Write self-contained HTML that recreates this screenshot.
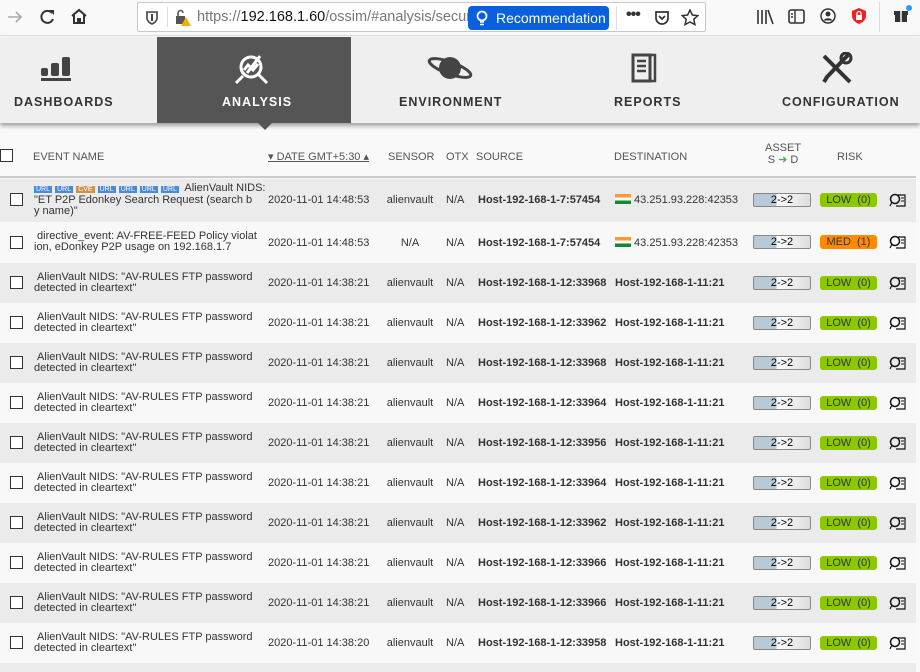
<!DOCTYPE html>
<html><head><meta charset="utf-8"><style>
*{box-sizing:border-box;margin:0;padding:0}
body{width:920px;height:672px;overflow:hidden;background:#f9f9f9;font-family:"Liberation Sans",sans-serif;position:relative;color:#333}
.tb{position:absolute;left:0;top:0;width:920px;height:36px;background:#f9f9fa;border-bottom:1px solid #ddd}
.url{position:absolute;left:137px;top:2px;width:569px;height:30px;border:1px solid #c8c8c8;background:#fff;border-radius:2px}
.nav{position:absolute;left:0;top:37px;width:920px;height:86px;background:#efefef;box-shadow:0 3px 4px rgba(0,0,0,.35)}
.navi{position:absolute;top:58px;font-size:12.5px;font-weight:bold;letter-spacing:1px;color:#333}
.ana{position:absolute;left:157px;top:0;width:194px;height:86px;background:#555}
.row{position:absolute;left:0;width:916px;height:40px;font-size:11px;color:#333}
.row div{position:absolute}
.g{background:#ebebeb}.w{background:#f8f8f8}
.cb{left:10px;width:13px;height:13px;border:1px solid #333;background:#fff}
.ev{left:34px;line-height:11px;font-size:11px;white-space:nowrap}
.dt{left:268px}.sn{left:370px;width:80px;text-align:center}.ot{left:446px}
.src{left:478px;font-weight:bold}.dst{left:615px;font-weight:bold}
.as{left:753px;width:58px;height:14px;border:1px solid #888;border-radius:2px;background:linear-gradient(90deg,#b7cad6 0 40%,#fff 40%,#ddd);text-align:center;font-size:11px;line-height:12px;color:#000}
.rk{left:820px;width:57px;height:14px;border-radius:3px;background:#8cc800;text-align:center;line-height:14px;font-size:11px;color:#333;word-spacing:3px}
.ic{left:889px;width:17px;height:14px}
</style></head><body>
<div class="tb">
<svg style="position:absolute;left:6px;top:9px" width="18" height="16"><path d="M2 8h13M10 3l5 5-5 5" stroke="#aaa" stroke-width="1.6" fill="none"/></svg>
<svg style="position:absolute;left:39px;top:8px" width="18" height="18"><path d="M13 5a6 6 0 1 0 1 6" stroke="#333" stroke-width="2" fill="none"/><path d="M10 2h5v5z" fill="#333"/></svg>
<svg style="position:absolute;left:70px;top:7px" width="18" height="18"><path d="M2 9l7-6 7 6M4 8v8h4v-4h2v4h4V8" stroke="#333" stroke-width="2" fill="none"/></svg>
<div class="url">
<svg style="position:absolute;left:7px;top:7px" width="14" height="16"><path d="M2 2h10v6c0 4-5 6-5 6S2 12 2 8z" stroke="#444" stroke-width="1.6" fill="none"/><path d="M7 4v7" stroke="#444" stroke-width="2"/></svg>
<div style="position:absolute;left:29px;top:4px;width:1px;height:20px;background:#ddd"></div>
<svg style="position:absolute;left:37px;top:6px" width="18" height="18"><rect x="1" y="7" width="9" height="8" fill="#555"/><path d="M3 7V4a2.5 2.5 0 0 1 5 0" stroke="#555" stroke-width="1.6" fill="none"/><path d="M11 8l5 9h-10z" fill="#f3b000"/></svg>
<div style="position:absolute;left:59px;top:6px;font-size:14.5px;color:#777;white-space:nowrap">https://<span style="color:#111">192.168.1.60</span>/ossim/#analysis/secur</div>
<div style="position:absolute;left:330px;top:3px;width:141px;height:24px;background:#0a60dc;border-radius:4px;color:#fff;font-size:14px;line-height:24px;padding-left:28px">Recommendation
<svg style="position:absolute;left:8px;top:4px" width="12" height="17"><circle cx="6" cy="6" r="4.5" stroke="#fff" stroke-width="1.8" fill="none"/><path d="M4 12h4M4 14.5h4" stroke="#fff" stroke-width="1.5"/></svg></div>
<div style="position:absolute;left:478px;top:3px;width:1px;height:24px;background:#ddd"></div>
<div style="position:absolute;left:488px;top:3px;font-size:16px;font-weight:bold;color:#333;letter-spacing:-1px">•••</div>
<svg style="position:absolute;left:516px;top:7px" width="16" height="16"><path d="M2 2h12v6a6 6 0 0 1-12 0z" stroke="#333" stroke-width="1.7" fill="none"/><path d="M5 6l3 3 3-3" stroke="#333" stroke-width="1.7" fill="none"/></svg>
<svg style="position:absolute;left:543px;top:6px" width="18" height="18"><path d="M9 1l2.4 5 5.4.6-4 3.7 1.1 5.3L9 13l-4.9 2.6 1.1-5.3-4-3.7 5.4-.6z" stroke="#333" stroke-width="1.5" fill="none"/></svg>
</div>
<svg style="position:absolute;left:756px;top:8px" width="18" height="17"><path d="M2 2v14M6 2v14M10 2v14M12 2l5 14" stroke="#333" stroke-width="1.6"/></svg>
<svg style="position:absolute;left:788px;top:9px" width="18" height="16"><rect x="1" y="1" width="15" height="13" rx="2" stroke="#333" stroke-width="1.6" fill="none"/><path d="M7 1v13M3 5h2M3 8h2" stroke="#333" stroke-width="1.4"/></svg>
<svg style="position:absolute;left:820px;top:8px" width="16" height="16"><circle cx="8" cy="8" r="7" stroke="#333" stroke-width="1.5" fill="none"/><circle cx="8" cy="6" r="2.5" fill="#333"/><path d="M3.5 12.5a5 4 0 0 1 9 0" fill="#333"/></svg>
<svg style="position:absolute;left:851px;top:7px" width="16" height="18"><path d="M8 1l7 3v5c0 4-4 7-7 8-3-1-7-4-7-8V4z" fill="#e22"/><rect x="5" y="8" width="6" height="5" fill="#fff"/><path d="M6 8V6.5a2 2 0 0 1 4 0V8" stroke="#fff" stroke-width="1.3" fill="none"/></svg>
<div style="position:absolute;left:879px;top:2px;width:1px;height:30px;background:#ddd"></div>
<svg style="position:absolute;left:893px;top:5px" width="20" height="18"><rect x="1" y="6" width="14" height="4" fill="#333"/><rect x="2" y="10" width="12" height="7" fill="#333"/><path d="M8 6v11" stroke="#f9f9fa" stroke-width="1.5"/><circle cx="16" cy="3" r="3" fill="#2a9cf5"/></svg>
</div>
<div class="nav">
<div class="ana"></div>
<svg style="position:absolute;left:258px;top:86px" width="14" height="8"><path d="M0 0h14L7 7z" fill="#555"/></svg>
<svg style="position:absolute;left:40px;top:17px" width="38" height="32"><rect x="1" y="14" width="7" height="8" rx="2" fill="#444"/><rect x="11" y="9" width="8" height="13" rx="2" fill="#444"/><rect x="22" y="3" width="8" height="19" rx="2" fill="#444"/><rect x="1" y="24" width="30" height="3" fill="#444"/></svg>
<div class="navi" style="left:14px">DASHBOARDS</div>
<svg style="position:absolute;left:233px;top:17px" width="42" height="32"><circle cx="18" cy="13" r="10" stroke="#fff" stroke-width="3" fill="none"/><path d="M25 20l9 9M3 29l7-7M11 16l4-5 5 5 5-6M27 2L14 19" stroke="#fff" stroke-width="3" fill="none"/></svg>
<div class="navi" style="left:222px;color:#fff">ANALYSIS</div>
<svg style="position:absolute;left:426px;top:16px" width="48" height="32"><circle cx="24" cy="15" r="11" fill="#444"/><ellipse cx="24" cy="15" rx="22" ry="6" transform="rotate(20 24 15)" stroke="#444" stroke-width="3" fill="none"/></svg>
<div class="navi" style="left:399px">ENVIRONMENT</div>
<svg style="position:absolute;left:630px;top:15px" width="28" height="34"><path d="M3 3h17v26H3z" stroke="#444" stroke-width="3" fill="none"/><path d="M20 3h5v26h-5" stroke="#444" stroke-width="2.5" fill="none"/><path d="M7 9h9M7 14h9M7 19h9" stroke="#444" stroke-width="2.5"/></svg>
<div class="navi" style="left:614px">REPORTS</div>
<svg style="position:absolute;left:820px;top:15px" width="34" height="34"><path d="M4 4l26 26" stroke="#333" stroke-width="4"/><path d="M28 3L6 26M4 30l3-5" stroke="#333" stroke-width="4"/><circle cx="26" cy="6" r="5" stroke="#333" stroke-width="3" fill="none"/></svg>
<div class="navi" style="left:782px">CONFIGURATION</div>
</div>
<div style="position:absolute;left:0;top:130px;width:916px;height:48px;background:#f9f9f9;border-bottom:2px solid #ccc;font-size:11px;color:#555">
<div style="position:absolute;left:0;top:19px;width:13px;height:13px;border:1px solid #333;background:#fff"></div>
<div style="position:absolute;left:33px;top:21px">EVENT NAME</div>
<div style="position:absolute;left:268px;top:20px;text-decoration:underline">▾ DATE GMT+5:30 ▴</div>
<div style="position:absolute;left:388px;top:21px">SENSOR</div>
<div style="position:absolute;left:446px;top:21px">OTX</div>
<div style="position:absolute;left:476px;top:21px">SOURCE</div>
<div style="position:absolute;left:614px;top:21px">DESTINATION</div>
<div style="position:absolute;left:765px;top:12px;line-height:12px;text-align:center">ASSET<br>S <span style="color:#5a5">➜</span> D</div>
<div style="position:absolute;left:837px;top:21px">RISK</div>
</div>
<div class="row g" style="top:179px;height:43px"><div class="cb" style="top:14px"></div>
<div class="ev" style="top:4px"><span style="font-size:7px;color:#fff;background:#4a8ad8;padding:0 2px">URL</span> <span style="font-size:7px;color:#fff;background:#4a8ad8;padding:0 2px">URL</span> <span style="font-size:7px;color:#fff;background:#d09050;padding:0 2px">CVE</span> <span style="font-size:7px;color:#fff;background:#4a8ad8;padding:0 2px">URL</span> <span style="font-size:7px;color:#fff;background:#4a8ad8;padding:0 2px">URL</span> <span style="font-size:7px;color:#fff;background:#4a8ad8;padding:0 2px">URL</span> <span style="font-size:7px;color:#fff;background:#4a8ad8;padding:0 2px">URL</span>&nbsp; AlienVault NIDS:<br>"ET P2P Edonkey Search Request (search b<br>y name)"</div>
<div class="dt" style="top:15px">2020-11-01 14:48:53</div><div class="sn" style="top:15px">alienvault</div><div class="ot" style="top:15px">N/A</div><div class="src" style="top:15px">Host-192-168-1-7:57454</div><div class="dst" style="top:15px;font-weight:normal"><span style="display:inline-block;width:16px;height:10px;background:linear-gradient(#f93 0 33%,#fff 33% 66%,#183 66%);vertical-align:-1px"></span> 43.251.93.228:42353</div><div class="as" style="top:14px">2-&gt;2</div><div class="rk" style="top:14px">LOW (0)</div><div class="ic" style="top:14px"><svg width="17" height="14"><circle cx="6" cy="6" r="4.5" stroke="#111" stroke-width="1.5" fill="none"/><path d="M3 9l-2 4M9 2h7v11H7" stroke="#111" stroke-width="1.2" fill="none"/><path d="M12 5h3M12 8h3" stroke="#111"/></svg></div></div>
<div class="row w" style="top:222px;height:41px"><div class="cb" style="top:14px"></div>
<div class="ev" style="top:9px">&nbsp;directive_event: AV-FREE-FEED Policy violat<br>ion, eDonkey P2P usage on 192.168.1.7</div>
<div class="dt" style="top:15px">2020-11-01 14:48:53</div><div class="sn" style="top:15px">N/A</div><div class="ot" style="top:15px">N/A</div><div class="src" style="top:15px">Host-192-168-1-7:57454</div><div class="dst" style="top:15px;font-weight:normal"><span style="display:inline-block;width:16px;height:10px;background:linear-gradient(#f93 0 33%,#fff 33% 66%,#183 66%);vertical-align:-1px"></span> 43.251.93.228:42353</div><div class="as" style="top:13px">2-&gt;2</div><div class="rk" style="top:13px;background:#ff8a00">MED (1)</div><div class="ic" style="top:13px"><svg width="17" height="14"><circle cx="6" cy="6" r="4.5" stroke="#111" stroke-width="1.5" fill="none"/><path d="M3 9l-2 4M9 2h7v11H7" stroke="#111" stroke-width="1.2" fill="none"/><path d="M12 5h3M12 8h3" stroke="#111"/></svg></div></div>
<div id="rows"></div>
<div style="position:absolute;left:0;top:663px;width:916px;height:9px;background:#ebebeb"></div>
<script>
var p=["33968","33962","33968","33964","33956","33964","33962","33966","33966","33958"],h="";
for(var i=0;i<10;i++){var t=263+i*40;h+='<div class="row '+(i%2?'w':'g')+'" style="top:'+t+'px"><div class="cb" style="top:13px"></div><div class="ev" style="top:9px">&nbsp;AlienVault NIDS: "AV-RULES FTP password<br>detected in cleartext"</div><div class="dt" style="top:14px">2020-11-01 14:38:'+(i==9?'20':'21')+'</div><div class="sn" style="top:14px">alienvault</div><div class="ot" style="top:14px">N/A</div><div class="src" style="top:14px">Host-192-168-1-12:'+p[i]+'</div><div class="dst" style="top:14px">Host-192-168-1-11:21</div><div class="as" style="top:13px">2-&gt;2</div><div class="rk" style="top:13px">LOW (0)</div><div class="ic" style="top:13px"><svg width="17" height="14"><circle cx="6" cy="6" r="4.5" stroke="#111" stroke-width="1.5" fill="none"/><path d="M3 9l-2 4M9 2h7v11H7" stroke="#111" stroke-width="1.2" fill="none"/><path d="M12 5h3M12 8h3" stroke="#111"/></svg></div></div>';}
document.getElementById("rows").outerHTML=h;
</script>
</body></html>
